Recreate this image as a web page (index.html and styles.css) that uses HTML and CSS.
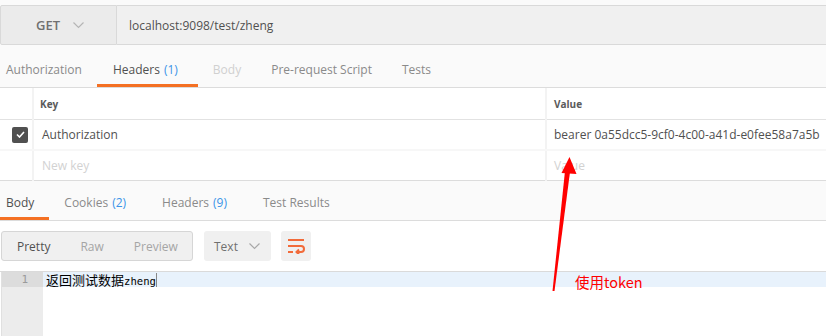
FILE: index.html
```html
<!DOCTYPE html>
<html lang="en">
<head>
    <meta charset="UTF-8">
    <title>Request</title>
    <link rel="stylesheet" href="styles.css">
</head>
<body>
    <div class="page">
        <!-- Request URL bar -->
        <div class="url-bar">
            <div class="method">
                <span>GET</span>
                <svg class="chevron" width="11" height="7" viewBox="0 0 11 7"><path d="M0.5 0.5 L5.5 5.5 L10.5 0.5" fill="none" stroke="#b5b5b5" stroke-width="1.2"/></svg>
            </div>
            <div class="url-input">localhost:9098/test/zheng</div>
        </div>

        <!-- Request tabs -->
        <div class="tabs req-tabs">
            <div class="tab first">Authorization</div>
            <div class="tab active">Headers <span class="count">(1)</span></div>
            <div class="tab disabled">Body</div>
            <div class="tab">Pre-request Script</div>
            <div class="tab">Tests</div>
        </div>

        <!-- Headers table -->
        <table class="headers-table">
            <colgroup>
                <col class="col-check">
                <col class="col-key">
                <col class="col-value">
            </colgroup>
            <thead>
                <tr>
                    <th></th>
                    <th>Key</th>
                    <th>Value</th>
                </tr>
            </thead>
            <tbody>
                <tr>
                    <td class="check-cell"><span class="checkbox"><svg width="9" height="7" viewBox="0 0 9 7"><path d="M1 3.5 L3.5 6 L8 1" fill="none" stroke="#fff" stroke-width="1.6"/></svg></span></td>
                    <td>Authorization</td>
                    <td>bearer 0a55dcc5-9cf0-4c00-a41d-e0fee58a7a5b</td>
                </tr>
                <tr class="new-row">
                    <td class="check-cell"></td>
                    <td class="placeholder">New key</td>
                    <td class="placeholder">Value</td>
                </tr>
            </tbody>
        </table>

        <!-- Response tabs -->
        <div class="tabs resp-tabs">
            <div class="tab first active">Body</div>
            <div class="tab">Cookies <span class="count">(2)</span></div>
            <div class="tab">Headers <span class="count">(9)</span></div>
            <div class="tab">Test Results</div>
        </div>

        <!-- Response toolbar -->
        <div class="toolbar">
            <div class="segment">
                <span class="seg-btn selected">Pretty</span>
                <span class="seg-btn">Raw</span>
                <span class="seg-btn">Preview</span>
            </div>
            <div class="dropdown">
                <span>Text</span>
                <svg class="chevron" width="11" height="7" viewBox="0 0 11 7"><path d="M0.5 0.5 L5.5 5.5 L10.5 0.5" fill="none" stroke="#a8a8a8" stroke-width="1.2"/></svg>
            </div>
            <div class="wrap-btn">
                <svg width="17" height="15" viewBox="0 0 17 15"><g fill="none" stroke="#f26b3a" stroke-width="2"><path d="M0 1 H16"/><path d="M0 7 H13 A3 3 0 0 1 13 13 H8.5"/><path d="M11 10.5 L8.5 13 L11 15.5"/><path d="M0 13 H5"/></g></svg>
            </div>
        </div>

        <!-- Response body -->
        <div class="editor">
            <div class="gutter">
                <div class="line-no current">1</div>
            </div>
            <div class="code">
                <div class="code-line current">返回测试数据<span class="mono">zheng</span><span class="cursor"></span></div>
            </div>
        </div>

        <!-- Annotation drawn on the screenshot -->
        <svg class="arrow" width="826" height="336" viewBox="0 0 826 336">
            <polygon points="552.5,291 554.5,291 570,172 565,171" fill="#ff0000"/>
            <polygon points="569.5,157 561.5,173 576.5,174" fill="#ff0000"/>
        </svg>
        <div class="note">使用token</div>
    </div>
</body>
</html>
```

FILE: styles.css
```css
/* Global styles */
body {
    margin: 0;
    font-family: "Open Sans", "Noto Sans CJK SC", sans-serif;
    font-size: 12px;
    color: #505050;
    background-color: #fff;
}

.page {
    position: relative;
    width: 826px;
    height: 336px;
    overflow: hidden;
}

/* URL bar */
.url-bar {
    display: flex;
    height: 40px;
    border-top: 5px solid #fafafa;
    background-color: #fafafa;
}

.method,
.url-input {
    border-top: 1px solid #d9d9d9;
    border-bottom: 1px solid #d9d9d9;
    display: flex;
    align-items: center;
}

.method {
    width: 117px;
    border-left: 1px solid #d9d9d9;
    border-right: 1px solid #d9d9d9;
    border-radius: 2px 0 0 2px;
    background-color: #ebebeb;
    padding-left: 35px;
    box-sizing: border-box;
    font-size: 13px;
    font-weight: 600;
    color: #707070;
    gap: 13px;
}

.url-input {
    flex: 1;
    background-color: #f0f0f0;
    padding-left: 12px;
    font-size: 12px;
    color: #505050;
}

/* Tabs */
.tabs {
    display: flex;
    background-color: #fafafa;
    border-bottom: 1px solid #dcdcdc;
}

.req-tabs {
    height: 42px;
}

.resp-tabs {
    height: 39px;
}

.tab {
    display: flex;
    align-items: center;
    padding: 0 15px;
    color: #8a8a8a;
    border-bottom: 3px solid transparent;
    white-space: nowrap;
}

.tab.first {
    padding-left: 6px;
}

.req-tabs .tab {
    padding-top: 10px;
}

.resp-tabs .tab {
    padding: 6px 18px 0 18px;
}

.resp-tabs .tab.first {
    padding: 6px 15px 0 6px;
}

.resp-tabs .tab.first + .tab {
    padding-left: 15px;
}

.tab.active {
    color: #505050;
    border-bottom-color: #f47023;
}

.req-tabs .tab.active {
    padding: 10px 20px 0 16px;
}

.tab.disabled {
    color: #d0d0d0;
}

.count {
    color: #3a94e8;
    margin-left: 4px;
}

/* Headers table */
.headers-table {
    width: 100%;
    border-collapse: collapse;
    table-layout: fixed;
}

col.col-check {
    width: 33px;
}

col.col-key {
    width: 513px;
}

.headers-table th,
.headers-table td {
    height: 29px;
    padding: 0 0 0 8px;
    text-align: left;
    border-bottom: 1px solid #e2e2e2;
    border-left: 2px solid #f3f3f3;
    white-space: nowrap;
    overflow: hidden;
}

.headers-table th {
    height: 30px;
    padding-left: 6px;
    padding-top: 1px;
    font-size: 10px;
    font-weight: 700;
    color: #5a5a5a;
}

.headers-table th:last-child {
    padding-left: 7px;
}

.headers-table td:last-child {
    padding-left: 7px;
}

.headers-table tr > :first-child {
    border-left: none;
}

.headers-table td.check-cell {
    padding-left: 12px;
}

.headers-table tbody tr:first-child td {
    border-bottom: 2px solid #f7f7f7;
}

.new-row td {
    border-bottom: 1px solid #dcdcdc;
}

.checkbox {
    display: flex;
    align-items: center;
    justify-content: center;
    width: 16px;
    height: 16px;
    border-radius: 2px;
    background-color: #505050;
}

.placeholder {
    color: #d2d2d2;
}

/* Toolbar */
.toolbar {
    display: flex;
    gap: 11px;
    padding: 10px 0 10px 1px;
}

.segment {
    display: flex;
    width: 192px;
    height: 30px;
    box-sizing: border-box;
    border: 1px solid #d6d6d6;
    border-radius: 3px;
    background-color: #f0f0f0;
    align-items: center;
}

.seg-btn {
    padding: 0 15px;
    color: #a5a5a5;
}

.seg-btn.selected {
    color: #505050;
}

.dropdown {
    display: flex;
    align-items: center;
    gap: 11px;
    width: 67px;
    height: 30px;
    box-sizing: border-box;
    padding-left: 10px;
    border-radius: 3px;
    background-color: #f0f0f0;
    color: #707070;
}

.wrap-btn {
    display: flex;
    align-items: center;
    justify-content: center;
    width: 30px;
    height: 30px;
    margin-left: -1px;
    border-radius: 3px;
    background-color: #f0f0f0;
}

/* Editor */
.editor {
    display: flex;
    height: 65px;
    border-top: 1px solid #dadada;
}

.gutter {
    width: 41px;
    margin-left: 1px;
    background-color: #ececec;
    border-left: 1px solid #e0e0e0;
}

.line-no {
    height: 15px;
    line-height: 15px;
    text-align: right;
    padding-right: 15px;
    font-family: "DejaVu Sans Mono", monospace;
    font-size: 11px;
    color: #9a9a9a;
}

.line-no.current {
    background-color: #dcdcdc;
}

.code {
    flex: 1;
}

.code-line {
    height: 15px;
    line-height: 15px;
    padding-left: 3px;
    font-family: "Noto Sans CJK SC", sans-serif;
    font-size: 13px;
    color: #000;
}

.code-line.current {
    background-color: #e8f2fc;
}

.mono {
    font-family: "DejaVu Sans Mono", monospace;
    font-size: 10.6px;
}

.cursor {
    display: inline-block;
    width: 1px;
    height: 14px;
    vertical-align: -2px;
    background-color: #888;
}

/* Annotation */
.arrow {
    position: absolute;
    left: 0;
    top: 0;
    pointer-events: none;
}

.note {
    position: absolute;
    left: 575px;
    top: 271px;
    font-family: "Noto Sans CJK SC", sans-serif;
    font-size: 14.5px;
    color: #ff0000;
}
```
